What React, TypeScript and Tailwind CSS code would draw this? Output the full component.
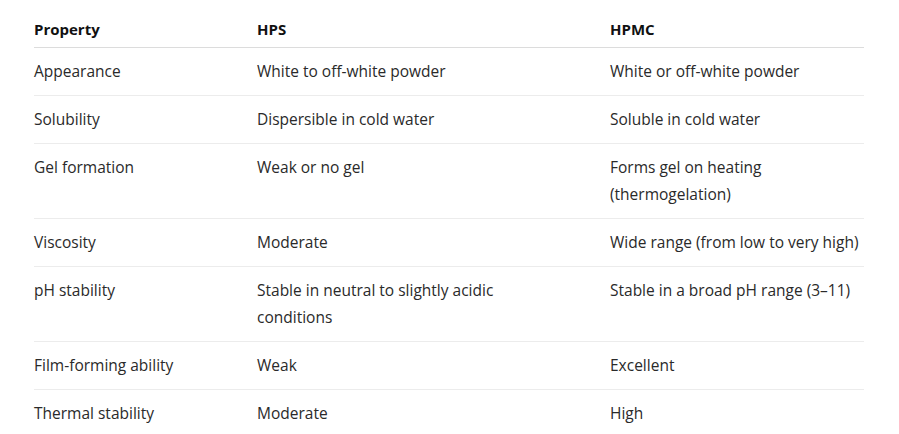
import React from "react";

const rows: [string, string, string][] = [
  ["Appearance", "White to off-white powder", "White or off-white powder"],
  ["Solubility", "Dispersible in cold water", "Soluble in cold water"],
  ["Gel formation", "Weak or no gel", "Forms gel on heating (thermogelation)"],
  ["Viscosity", "Moderate", "Wide range (from low to very high)"],
  ["pH stability", "Stable in neutral to slightly acidic conditions", "Stable in a broad pH range (3–11)"],
  ["Film-forming ability", "Weak", "Excellent"],
  ["Thermal stability", "Moderate", "High"],
];

export default function App() {
  return (
    <div
      className="w-[899px] h-[434px] overflow-hidden bg-white pl-[34px]"
      style={{ fontFamily: '"Open Sans", "Noto Sans", sans-serif' }}
    >
      <div className="w-[830px]">
        <div className="grid grid-cols-[223px_353px_254px] border-b border-[#dcdcdc] pt-[16px] pb-[4px] text-[15px] leading-[27px] font-bold text-[#111]">
          <div>Property</div>
          <div>HPS</div>
          <div>HPMC</div>
        </div>
        {rows.map((r, i) => (
          <div
            key={i}
            className="grid grid-cols-[223px_353px_260px] border-b border-[#ececec] py-[10px] text-[15.5px] leading-[27px] text-[#2a2a2a]"
          >
            <div className="pr-4">{r[0]}</div>
            <div className="pr-[60px]">{r[1]}</div>
            <div>{r[2]}</div>
          </div>
        ))}
      </div>
    </div>
  );
}
